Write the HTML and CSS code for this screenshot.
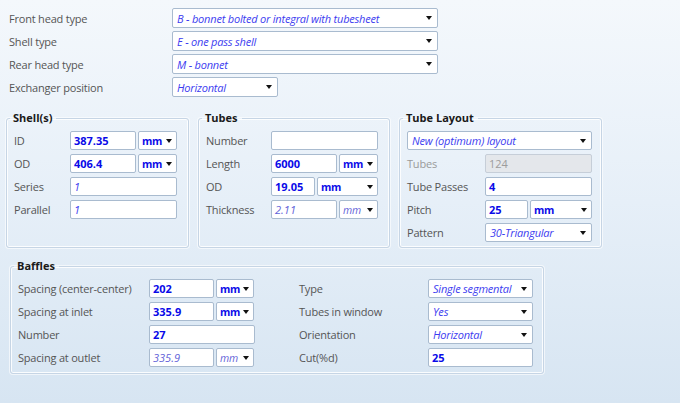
FILE: index.html
```html
<!DOCTYPE html>
<html>
<head>
<meta charset="utf-8">
<link rel="stylesheet" href="styles.css">
</head>
<body>
<div class="page">
  <div class="top">
    <div class="trow"><span class="lbl">Front head type</span><div class="box sel it w266"><span>B - bonnet bolted or integral with tubesheet</span><i class="arr"></i></div></div>
    <div class="trow"><span class="lbl">Shell type</span><div class="box sel it w266"><span>E - one pass shell</span><i class="arr"></i></div></div>
    <div class="trow"><span class="lbl">Rear head type</span><div class="box sel it w266"><span>M - bonnet</span><i class="arr"></i></div></div>
    <div class="trow"><span class="lbl">Exchanger position</span><div class="box sel it w106"><span>Horizontal</span><i class="arr"></i></div></div>
  </div>

  <div class="groups">
    <fieldset class="grp g-shell">
      <legend>Shell(s)</legend>
      <div class="row"><span class="lbl l56">ID</span><div class="box b w66">387.35</div><div class="box sel b unit w39"><span>mm</span><i class="arr"></i></div></div>
      <div class="row"><span class="lbl l56">OD</span><div class="box b w66">406.4</div><div class="box sel b unit w39"><span>mm</span><i class="arr"></i></div></div>
      <div class="row"><span class="lbl l56">Series</span><div class="box it w107">1</div></div>
      <div class="row"><span class="lbl l56">Parallel</span><div class="box it w107">1</div></div>
    </fieldset>

    <fieldset class="grp g-tubes">
      <legend>Tubes</legend>
      <div class="row"><span class="lbl l65">Number</span><div class="box w107"></div></div>
      <div class="row"><span class="lbl l65">Length</span><div class="box b w66">6000</div><div class="box sel b unit w39"><span>mm</span><i class="arr"></i></div></div>
      <div class="row"><span class="lbl l65">OD</span><div class="box b w44">19.05</div><div class="box sel b unit w61"><span>mm</span><i class="arr"></i></div></div>
      <div class="row"><span class="lbl l65">Thickness</span><div class="box it2 w66">2.11</div><div class="box sel it2 unit w39"><span>mm</span><i class="arr"></i></div></div>
    </fieldset>

    <fieldset class="grp g-layout">
      <legend>Tube Layout</legend>
      <div class="row"><div class="box sel it w185"><span>New (optimum) layout</span><i class="arr"></i></div></div>
      <div class="row"><span class="lbl l78 dim">Tubes</span><div class="box dis w107">124</div></div>
      <div class="row"><span class="lbl l78">Tube Passes</span><div class="box b w107">4</div></div>
      <div class="row"><span class="lbl l78">Pitch</span><div class="box b w43">25</div><div class="box sel b unit w62"><span>mm</span><i class="arr"></i></div></div>
      <div class="row"><span class="lbl l78">Pattern</span><div class="box sel it w107"><span>30-Triangular</span><i class="arr"></i></div></div>
    </fieldset>
  </div>

  <fieldset class="grp g-baffles">
    <legend>Baffles</legend>
    <div class="bcols">
      <div class="bcol">
        <div class="row"><span class="lbl l131">Spacing (center-center)</span><div class="box b w65">202</div><div class="box sel b unit w38"><span>mm</span><i class="arr"></i></div></div>
        <div class="row"><span class="lbl l131">Spacing at inlet</span><div class="box b w65">335.9</div><div class="box sel b unit w38"><span>mm</span><i class="arr"></i></div></div>
        <div class="row"><span class="lbl l131">Number</span><div class="box b w106">27</div></div>
        <div class="row"><span class="lbl l131">Spacing at outlet</span><div class="box it2 w65">335.9</div><div class="box sel it2 unit w38"><span>mm</span><i class="arr"></i></div></div>
      </div>
      <div class="bcol">
        <div class="row"><span class="lbl l129">Type</span><div class="box sel it w105"><span>Single segmental</span><i class="arr"></i></div></div>
        <div class="row"><span class="lbl l129">Tubes in window</span><div class="box sel it w105"><span>Yes</span><i class="arr"></i></div></div>
        <div class="row"><span class="lbl l129">Orientation</span><div class="box sel it w105"><span>Horizontal</span><i class="arr"></i></div></div>
        <div class="row"><span class="lbl l129">Cut(%d)</span><div class="box b w105">25</div></div>
      </div>
    </div>
  </fieldset>
</div>
</body>
</html>
```

FILE: styles.css
```css
* { box-sizing: border-box; }
html, body { margin: 0; padding: 0; }
body {
  width: 680px;
  height: 403px;
  overflow: hidden;
  font-family: "Open Sans", "Noto Sans", sans-serif;
  font-size: 11px;
  color: #505050;
  background: linear-gradient(to bottom, #f4f8fc 0%, #e6eff8 50%, #d7e5f2 100%);
}
.page { padding: 8px 0 0 0; }

.top {
  display: flex;
  flex-direction: column;
  gap: 3px;
  padding-left: 9px;
}
.trow { display: flex; align-items: center; height: 20px; }
.trow .lbl { width: 163px; }

.lbl { white-space: nowrap; color: #555; letter-spacing: -0.2px; }
.dim { color: #9a9a9a; }
.l56 { width: 56px; }
.l65 { width: 65px; }
.l78 { width: 78px; }
.l131 { width: 131px; }
.l129 { width: 129px; }

.box {
  height: 19px;
  background: #fff;
  border: 1px solid #a9bbcf;
  border-radius: 2px;
  padding: 0 3px;
  display: flex;
  align-items: center;
  white-space: nowrap;
  flex: none;
}
.trow .box { height: 20px; }
.row .box + .box { margin-left: 2px; }
.sel { justify-content: space-between; padding-left: 4px; padding-right: 5px; gap: 2px; }
.unit { padding-left: 3px; padding-right: 4px; }
.unit span { font-size: 10.5px; letter-spacing: -0.2px; }
.arr {
  display: block;
  width: 0; height: 0;
  border-left: 3px solid transparent;
  border-right: 3px solid transparent;
  border-top: 4px solid #111;
  flex: none;
}
.b { color: #0a0ae8; font-weight: 700; }
.it { color: #3c3cf0; font-style: italic; letter-spacing: -0.2px; }
.it2 { color: #6262d8; font-style: italic; }
.dis { background: #e4e7eb; border-color: #c6ced8; color: #9c9c9c; }

.w266 { width: 266px; }
.w106 { width: 106px; }
.w107 { width: 107px; }
.w105 { width: 105px; }
.w185 { width: 185px; }
.w66 { width: 66px; }
.w65 { width: 65px; }
.w44 { width: 44px; }
.w43 { width: 43px; }
.w39 { width: 39px; }
.w38 { width: 38px; }
.w61 { width: 61px; }
.w62 { width: 62px; }

.groups {
  display: flex;
  gap: 9px;
  padding-left: 6px;
  margin-top: 13px;
}
.grp {
  margin: 0;
  min-width: 0;
  border: 1px solid #c6d5e5;
  border-radius: 3px;
  box-shadow: inset 0 0 0 1px rgba(255,255,255,0.85), 0 0 0 1px rgba(255,255,255,0.6);
  padding: 5px 7px 28px 7px;
  display: flex;
  flex-direction: column;
  gap: 4px;
}
.grp legend {
  font-weight: 700;
  font-size: 11px;
  color: #1a1a1a;
  padding: 0 4px 0 3px;
  margin-left: -4px;
  line-height: 16px;
}
.row { display: flex; align-items: center; height: 19px; }

.g-shell { width: 183px; }
.g-tubes { width: 192px; }
.g-layout { width: 203px; padding-bottom: 4px; }

.g-baffles {
  width: 534px;
  margin: 10px 0 0 10px;
  padding-bottom: 6px;
}
.bcols { display: flex; gap: 44px; }
.bcol { display: flex; flex-direction: column; gap: 4px; }
```
